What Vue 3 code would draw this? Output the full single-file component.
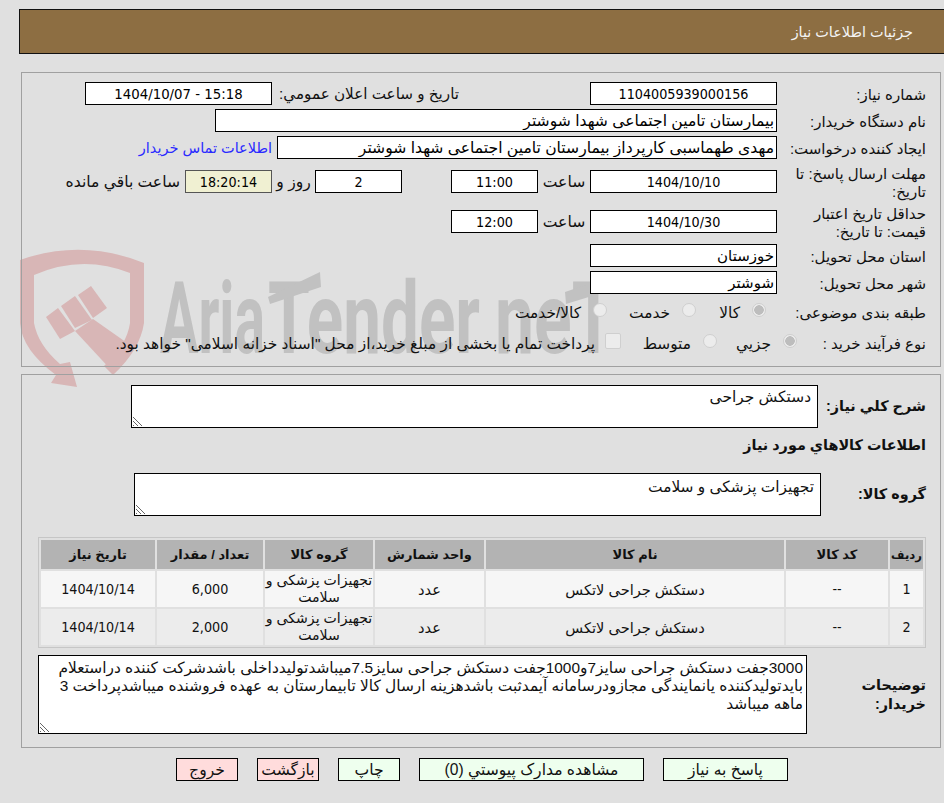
<script setup>
const items = [
  { id: 1, code: "--", name: "دستکش جراحی لاتکس", unit: "عدد", group: "تجهیزات پزشکی و سلامت", qty: "6,000", date: "1404/10/14" },
  { id: 2, code: "--", name: "دستکش جراحی لاتکس", unit: "عدد", group: "تجهیزات پزشکی و سلامت", qty: "2,000", date: "1404/10/14" },
];

const description =
  "3000جفت دستکش جراحی سایز7و1000جفت دستکش جراحی سایز7.5میباشدتولیدداخلی باشدشرکت کننده دراستعلام بایدتولیدکننده یانمایندگی مجازودرسامانه آیمدثبت باشدهزینه ارسال کالا تابیمارستان به عهده فروشنده میباشدپرداخت 3 ماهه میباشد";
</script>

<template>
  <div class="page">
    <!-- watermark sits behind the form -->
    <svg class="watermark" viewBox="0 0 944 803" aria-hidden="true">
      <path
        class="shield"
        d="M20 260 Q82 238 144 263 L144 323 Q140 350 113 375 L104 366 Q127 345 130 323 L130 273 Q82 254 34 275 L34 323 Q38 345 60 364 L70 362 L77 387 L51 383 L56 375 Q22 350 20 323 Z"
      />
      <polygon class="shield" points="46,317 58,308 75,331 60,339" />
      <polygon class="shield" points="61,306 75,296 92,320 75,328" />
      <polygon class="shield" points="78,295 91,286 107,308 93,318" />
      <polygon class="shield" points="75,331 93,319 130,345 113,372" />
      <text class="wm-text" x="160" y="353" textLength="105" lengthAdjust="spacingAndGlyphs">Aria</text>
      <text class="wm-text" x="268" y="353" textLength="212" lengthAdjust="spacingAndGlyphs">Tender</text>
      <text class="wm-text" x="495" y="353" textLength="120" lengthAdjust="spacingAndGlyphs">neT</text>
      <polygon class="wm-bar" points="268,297 320,272 321,287 270,304" />
      <polygon class="wm-bar" points="565,292 618,274 618,288 566,304" />
    </svg>

    <div class="content">
      <header class="title-bar">جزئیات اطلاعات نیاز</header>

      <section class="panel info">
        <div class="row h27">
          <label class="lbl">شماره نیاز:</label>
          <input class="field f187 center" readonly value="1104005939000156" />
          <label class="lbl-pub">تاریخ و ساعت اعلان عمومي:</label>
          <input class="field f187 center ltr" readonly value="1404/10/07 - 15:18" />
        </div>
        <div class="row h27">
          <label class="lbl">نام دستگاه خریدار:</label>
          <input class="field f562" readonly value="بیمارستان تامین اجتماعی شهدا شوشتر" />
        </div>
        <div class="row h27">
          <label class="lbl">ایجاد کننده درخواست:</label>
          <input class="field f500" readonly value="مهدی طهماسبی کارپرداز بیمارستان تامین اجتماعی شهدا شوشتر" />
          <a class="contact">اطلاعات تماس خریدار</a>
        </div>
        <div class="row h41">
          <label class="lbl">مهلت ارسال پاسخ: تا<br />تاریخ:</label>
          <input class="field f187 center" readonly value="1404/10/10" />
          <span class="hour">ساعت</span>
          <input class="field f87 center" readonly value="11:00" />
          <input class="field f87 center days" readonly value="2" />
          <span class="day-lbl">روز و</span>
          <input class="field f87 center timer" readonly value="18:20:14" />
          <span class="left-lbl">ساعت باقي مانده</span>
        </div>
        <div class="row h39">
          <label class="lbl">حداقل تاریخ اعتبار<br />قیمت: تا تاریخ:</label>
          <input class="field f187 center" readonly value="1404/10/30" />
          <span class="hour">ساعت</span>
          <input class="field f87 center" readonly value="12:00" />
        </div>
        <div class="row h29">
          <label class="lbl">استان محل تحویل:</label>
          <input class="field f187 short" readonly value="خوزستان" />
        </div>
        <div class="row h25">
          <label class="lbl">شهر محل تحویل:</label>
          <input class="field f187 short" readonly value="شوشتر" />
        </div>
        <div class="row h33">
          <label class="lbl">طبقه بندی موضوعی:</label>
          <div class="opts cat">
            <span class="opt w70"><i class="radio on"></i>کالا</span>
            <span class="opt w89"><i class="radio"></i>خدمت</span>
            <span class="opt"><i class="radio"></i>کالا/خدمت</span>
          </div>
        </div>
        <div class="row h29">
          <label class="lbl narrow">نوع فرآیند خرید :</label>
          <div class="opts">
            <span class="opt w80"><i class="radio on"></i>جزيي</span>
            <span class="opt w96"><i class="radio"></i>متوسط</span>
            <span class="opt pay"><i class="check"></i>پرداخت تمام یا بخشی از مبلغ خرید،از محل "اسناد خزانه اسلامی" خواهد بود.</span>
          </div>
        </div>
      </section>

      <section class="panel goods">
        <div class="desc-row">
          <label class="lbl-b w108">شرح كلي نياز:</label>
          <textarea class="area area-need" readonly>دستکش جراحی</textarea>
        </div>
        <h3 class="heading">اطلاعات كالاهاي مورد نياز</h3>
        <div class="desc-row group-row">
          <label class="lbl-b w105">گروه کالا:</label>
          <textarea class="area area-group" readonly>تجهیزات پزشکی و سلامت</textarea>
        </div>

        <table class="items">
          <colgroup>
            <col style="width: 33px" />
            <col style="width: 102px" />
            <col style="width: 298px" />
            <col style="width: 109px" />
            <col style="width: 108px" />
            <col style="width: 106px" />
            <col style="width: 114px" />
          </colgroup>
          <thead>
            <tr>
              <th class="small">ردیف</th>
              <th>کد کالا</th>
              <th>نام کالا</th>
              <th>واحد شمارش</th>
              <th>گروه کالا</th>
              <th>تعداد / مقدار</th>
              <th>تاریخ نیاز</th>
            </tr>
          </thead>
          <tbody>
            <tr v-for="item in items" :key="item.id">
              <td class="num">{{ item.id }}</td>
              <td class="num">{{ item.code }}</td>
              <td>{{ item.name }}</td>
              <td>{{ item.unit }}</td>
              <td class="tight">{{ item.group }}</td>
              <td class="num">{{ item.qty }}</td>
              <td class="num">{{ item.date }}</td>
            </tr>
          </tbody>
        </table>

        <div class="buyer-row">
          <label class="lbl-b w119">توضیحات<br />خریدار:</label>
          <textarea class="area area-buyer" readonly :value="description"></textarea>
        </div>
      </section>

      <div class="actions">
        <button type="button" class="btn w125">پاسخ به نیاز</button>
        <button type="button" class="btn w225">مشاهده مدارک پیوستي (0)</button>
        <button type="button" class="btn w62">چاپ</button>
        <button type="button" class="btn w62 red">بازگشت</button>
        <button type="button" class="btn w62 red">خروج</button>
      </div>
    </div>
  </div>
</template>

<style>
body {
  background: #e0e0e0;
}
</style>

<style scoped>
.page {
  position: relative;
  width: 944px;
  height: 803px;
  overflow: hidden;
  background: #e0e0e0;
  direction: rtl;
  /* Liberation has no Arabic, so it only takes the digits and latin */
  font-family: "Liberation Sans", "DejaVu Sans", sans-serif;
  font-size: 15.6px;
  color: #111;
}

.watermark {
  position: absolute;
  top: 0;
  left: 0;
  width: 944px;
  height: 803px;
}

.shield {
  fill: #d8b6b6;
}

.wm-text {
  font-family: Roboto, sans-serif;
  font-weight: 700;
  font-size: 100px;
  fill: #c1c1c1;
  direction: ltr;
}

.wm-bar {
  fill: #c1c1c1;
}

.content {
  position: relative;
}

.title-bar {
  margin: 9px 0 0 19px;
  height: 45px;
  box-sizing: border-box;
  padding: 14px 31px 0 0;
  background: #8d6e42;
  border: 1px solid #111;
  border-right: none;
  color: #f4f4f4;
  font-size: 14.4px;
}

.panel {
  margin: 0 3px 0 21px;
  border: 1px solid #a0a0a0;
  box-sizing: border-box;
  padding-right: 14px;
}

.info {
  margin-top: 18px;
  height: 295px;
  padding-top: 7px;
}

.goods {
  margin-top: 7px;
  height: 374px;
  padding-top: 10px;
}

.row {
  display: flex;
  align-items: center;
}

.h25 { height: 25px; }
.h27 { height: 27px; }
.h29 { height: 29px; }
.h33 { height: 33px; }
.h39 { height: 39px; }
.h41 { height: 41px; }

.lbl {
  width: 149px;
  flex: none;
  font-size: 15px;
  line-height: 18px;
  padding-top: 2px;
}

.lbl.narrow {
  width: 129px;
}

.lbl-pub {
  width: 187px;
  margin-right: 131px;
  flex: none;
  font-size: 15.2px;
}

.field {
  box-sizing: border-box;
  height: 23px;
  flex: none;
  padding: 0 2px;
  border: 1px solid #000;
  background: #fff;
  font: inherit;
  color: #000;
  border-radius: 0;
  outline: none;
}

.field.short {
  font-size: 15px;
}

.f87 { width: 87px; }
.f187 { width: 187px; }
.f500 { width: 500px; }
.f562 { width: 562px; }

.center {
  text-align: center;
  font-family: "DejaVu Sans Condensed", "DejaVu Sans", sans-serif;
  font-size: 14.2px;
}

.ltr {
  direction: ltr;
  font-size: 14.8px;
}

.contact {
  margin-right: 5px;
  font-size: 14.5px;
  color: #2a2aff;
}

.hour {
  width: 52px;
  flex: none;
  text-align: center;
}

.days {
  margin-right: 49px;
}

.day-lbl {
  width: 43px;
  flex: none;
  text-align: center;
}

.timer {
  background: #f0f0d2;
  border-color: #555;
}

.left-lbl {
  margin-right: 5px;
}

.opts {
  display: flex;
  align-items: center;
  padding-top: 2px;
  font-size: 15.4px;
}

.opts.cat {
  margin-right: 11px;
}

.opt {
  display: flex;
  align-items: center;
  gap: 12px;
  flex: none;
  white-space: nowrap;
}

.w70 { width: 70px; }
.w80 { width: 80px; }
.w89 { width: 89px; }
.w96 { width: 96px; }

.opt.pay {
  gap: 10px;
}

.radio {
  width: 14px;
  height: 14px;
  box-sizing: border-box;
  margin-top: -5px;
  border: 1px solid #cfcfcf;
  border-radius: 50%;
  background: #ececec;
  flex: none;
}

.radio.on {
  background: radial-gradient(circle, #bdbdbd 0 4.5px, #ececec 5px);
}

.check {
  width: 16px;
  height: 16px;
  box-sizing: border-box;
  margin-top: -5px;
  border: 1px solid #cfcfcf;
  border-radius: 2px;
  background: #ececec;
  flex: none;
}

.lbl-b {
  flex: none;
  font-weight: 700;
  font-size: 14.4px;
  line-height: 19px;
}

.w105 { width: 105px; }
.w108 { width: 108px; }
.w119 { width: 119px; }

.desc-row {
  display: flex;
  align-items: center;
}

.area {
  display: block;
  box-sizing: border-box;
  flex: none;
  width: 687px;
  border: 1px solid #000;
  background: #fff;
  font: inherit;
  font-size: 15.4px;
  color: #111;
  outline: none;
  border-radius: 0;
}

/* small hatched grip in the bottom left corner */
.area::-webkit-resizer {
  background-color: #fff;
  background-image:
    linear-gradient(45deg, transparent 60%, #fff 60%),
    repeating-linear-gradient(45deg, #666 0 1px, #fff 1px 3px);
  background-size: 9px 9px;
  background-position: left 1px bottom 1px;
  background-repeat: no-repeat;
}

.area-need {
  height: 43px;
  padding: 2px 6px;
}

.area-group {
  height: 43px;
  padding: 4px 6px;
}

.area-buyer {
  width: 769px;
  height: 79px;
  padding: 3px;
  line-height: 18px;
}

.heading {
  margin: 7px 0 0;
  height: 20px;
  font-size: 14.4px;
  line-height: 20px;
  font-weight: 700;
}

.group-row {
  margin-top: 18px;
}

.items {
  margin-top: 21px;
  width: 888px;
  table-layout: fixed;
  border-collapse: separate;
  border-spacing: 2px;
  border: 1px solid #c6c6c6;
}

.items th {
  height: 29px;
  padding: 0;
  background: #b3b3b3;
  font-size: 13px;
  font-weight: 700;
}

.items th.small {
  font-size: 11.6px;
}

.items td {
  height: 36px;
  padding: 0;
  font-size: 14.6px;
  text-align: center;
}

.items td.num {
  font-family: "DejaVu Sans Condensed", "DejaVu Sans", sans-serif;
  font-size: 14.2px;
}

.items tbody tr:nth-child(1) td { background: #f6f6f6; }
.items tbody tr:nth-child(2) td { background: #ececec; }

.items td.tight {
  font-size: 14.1px;
  line-height: 17px;
}

.buyer-row {
  display: flex;
  align-items: center;
  margin-top: 7px;
}

.actions {
  display: flex;
  gap: 19px;
  margin: 10px 156px 0 0;
}

.btn {
  height: 23px;
  padding: 0;
  border: 1px solid #000;
  background: #eeffee;
  font: inherit;
  color: #111;
  border-radius: 0;
}

.btn.red {
  background: #ffdcdc;
}

.w62 { width: 62px; }
.w125 { width: 125px; }
.w225 { width: 225px; }
</style>
